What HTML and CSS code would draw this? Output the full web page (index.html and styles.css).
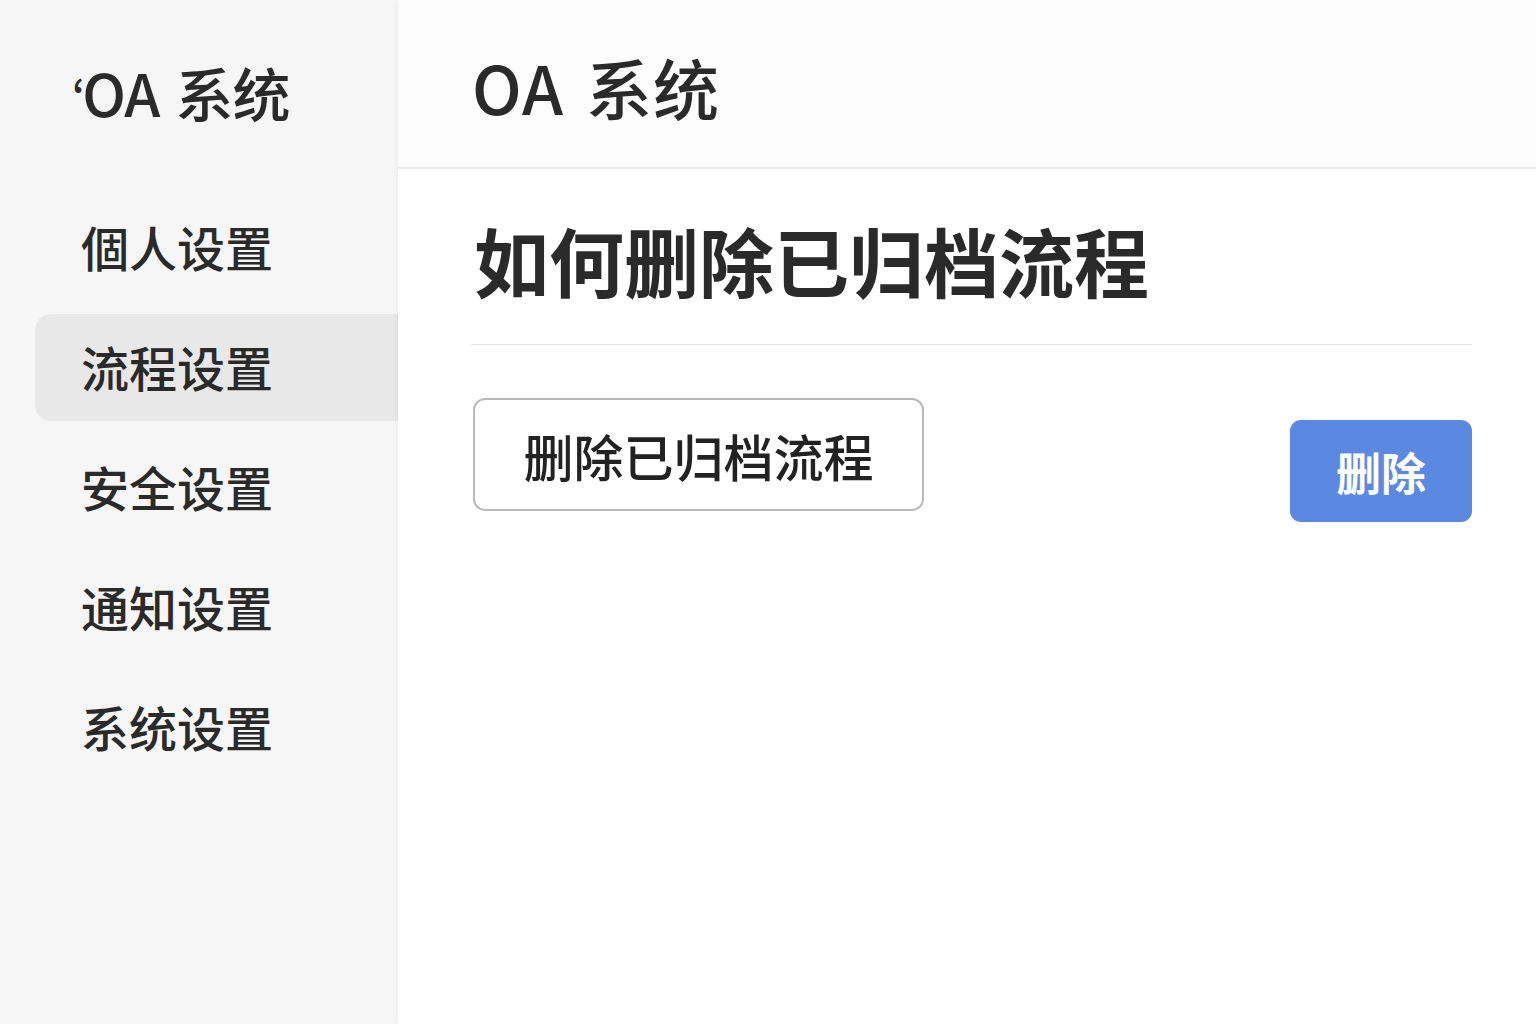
FILE: index.html
```html
<!DOCTYPE html>
<html lang="zh-CN">
<head>
    <meta charset="UTF-8">
    <meta name="viewport" content="width=device-width, initial-scale=1.0">
    <title>OA 系统 - 流程设置</title>
    <link rel="stylesheet" href="styles.css">
</head>
<body>
    <aside class="sidebar">
        <div class="logo"><span class="logo-tick">ʻ</span>OA 系统</div>
        <nav class="menu">
            <a class="menu-item">個人设置</a>
            <a class="menu-item active">流程设置</a>
            <a class="menu-item">安全设置</a>
            <a class="menu-item">通知设置</a>
            <a class="menu-item">系统设置</a>
        </nav>
    </aside>

    <div class="main">
        <header class="topbar">
            <h1>OA 系统</h1>
        </header>

        <section class="content">
            <h2>如何删除已归档流程</h2>
            <div class="action-row">
                <button type="button" class="btn-outline">删除已归档流程</button>
                <button type="button" class="btn-primary">删除</button>
            </div>
        </section>
    </div>
</body>
</html>
```

FILE: styles.css
```css
body {
    font-family: 'Noto Sans CJK SC', 'Noto Sans', sans-serif;
    margin: 0;
    padding: 0;
    color: #2a2a2a;
    background: #fff;
    display: flex;
    min-height: 100vh;
}

.sidebar {
    width: 398px;
    flex-shrink: 0;
    background-color: #f6f6f6;
    padding-top: 52px;
    box-sizing: border-box;
}

.logo {
    font-size: 58px;
    font-weight: 500;
    line-height: 80px;
    padding-left: 72px;
    letter-spacing: -1px;
    word-spacing: 4px;
}

.logo-tick {
    font-size: 44px;
    margin-right: -2px;
}

.menu {
    display: flex;
    flex-direction: column;
    gap: 13px;
    margin-top: 56px;
    padding-left: 35px;
}

.menu-item {
    display: flex;
    align-items: center;
    height: 107px;
    padding-left: 46px;
    padding-bottom: 3px;
    box-sizing: border-box;
    font-size: 48px;
    font-weight: 500;
    border-radius: 16px 0 0 16px;
    cursor: pointer;
}

.menu-item.active {
    background-color: #e8e8e8;
}

.main {
    flex: 1;
    display: flex;
    flex-direction: column;
    box-shadow: -2px 0 4px rgba(0, 0, 0, 0.04);
}

.topbar {
    height: 169px;
    background-color: #fcfcfc;
    border-bottom: 2px solid #ebebeb;
    display: flex;
    align-items: center;
    padding-left: 74px;
    padding-top: 4px;
    box-sizing: border-box;
}

.topbar h1 {
    margin: 0;
    font-size: 66px;
    font-weight: 500;
    letter-spacing: 1px;
    word-spacing: 6px;
}

.content {
    padding: 0 64px 0 73px;
}

.content h2 {
    margin: 0;
    padding: 43px 0 37px 3px;
    font-size: 75px;
    font-weight: 700;
    line-height: 95px;
    border-bottom: 1px solid #e2e2e2;
}

.action-row {
    display: flex;
    justify-content: space-between;
    align-items: flex-start;
    margin-top: 53px;
}

.btn-outline {
    width: 451px;
    height: 113px;
    margin-left: 2px;
    background: #fff;
    border: 2px solid #b9b9b9;
    border-radius: 12px;
    font-family: inherit;
    font-size: 50px;
    font-weight: 500;
    color: #222;
    cursor: pointer;
}

.btn-primary {
    width: 182px;
    height: 102px;
    margin-top: 22px;
    background-color: #5b88e0;
    border: none;
    border-radius: 11px;
    font-family: inherit;
    font-size: 45px;
    font-weight: 700;
    color: #fff;
    cursor: pointer;
}
```
